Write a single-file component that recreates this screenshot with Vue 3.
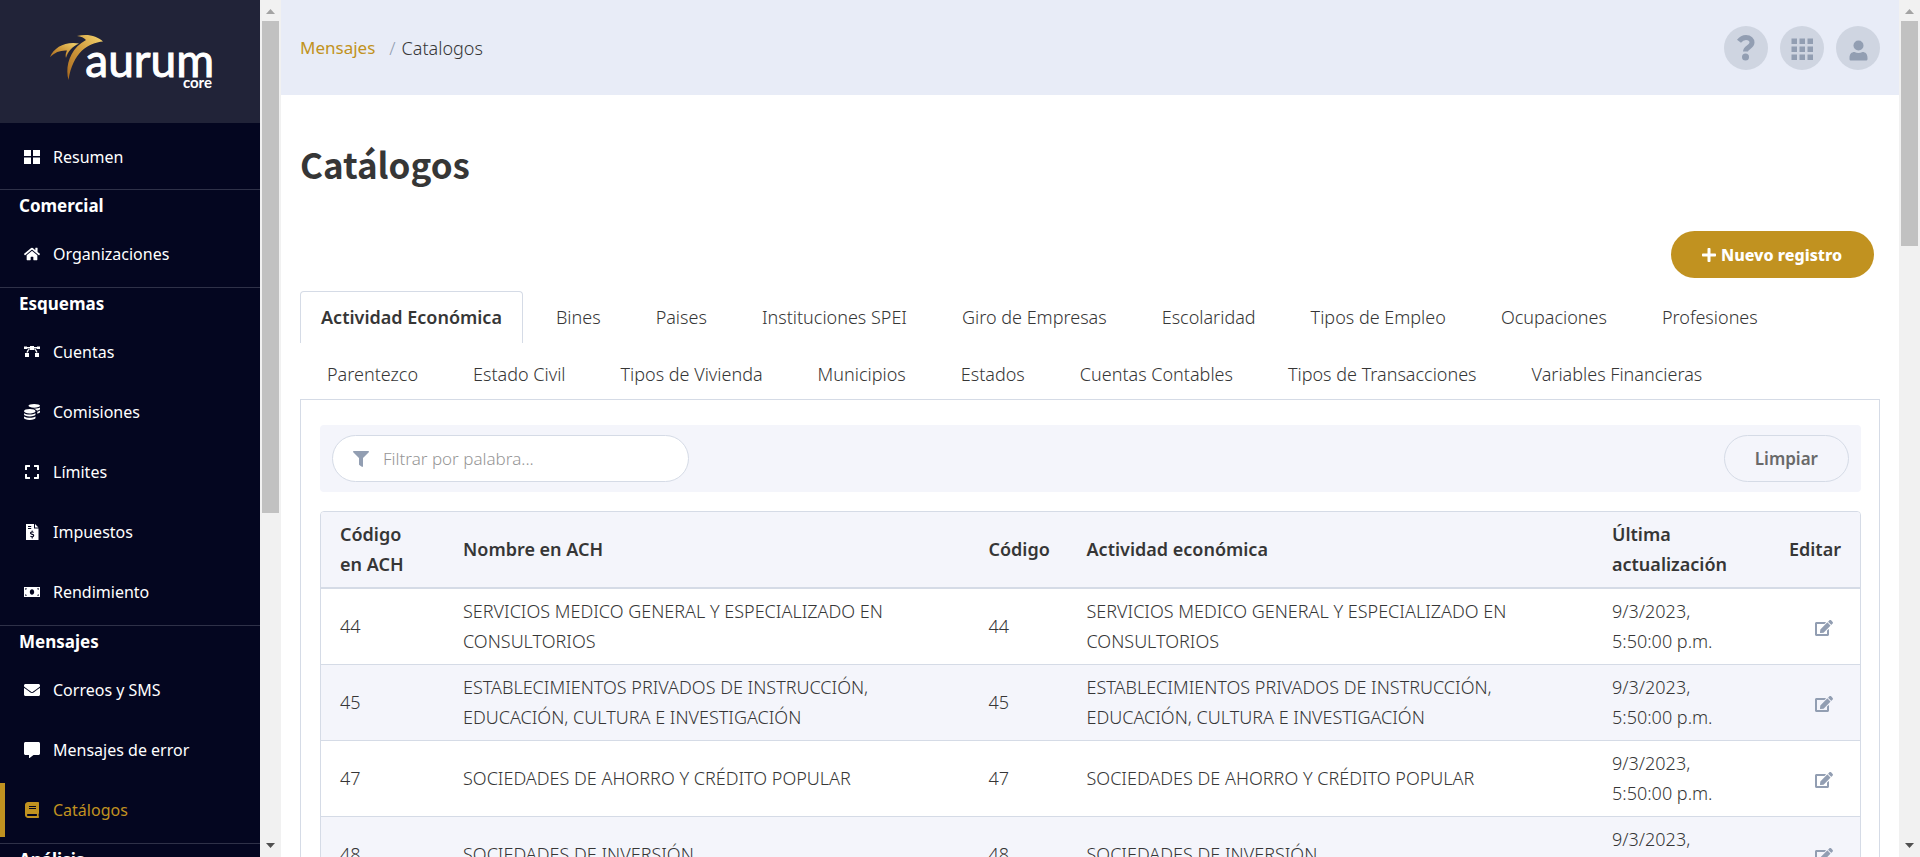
<script setup>
import { ref } from 'vue'

const icons = {
  grid: { box: '0 0 16 16', d: 'M0 1h7v6H0zM9 1h7v6H9zM0 8.500h7v6.500H0zM9 8.500h7v6.500H9z' },
  home: { box: '0 0 576 512', d: 'M280.37 148.26L96 300.11V464a16 16 0 0 0 16 16l112.06-.29a16 16 0 0 0 15.92-16V368a16 16 0 0 1 16-16h64a16 16 0 0 1 16 16v95.64a16 16 0 0 0 16 16.05L464 480a16 16 0 0 0 16-16V300L295.67 148.26a12.19 12.19 0 0 0-15.3 0zM571.6 251.47L488 182.56V44.05a12 12 0 0 0-12-12h-56a12 12 0 0 0-12 12v72.61L318.47 43a48 48 0 0 0-61 0L4.34 251.47a12 12 0 0 0-1.6 16.9l25.5 31A12 12 0 0 0 45.15 301l235.22-193.74a12.19 12.19 0 0 1 15.3 0L530.9 301a12 12 0 0 0 16.9-1.6l25.5-31a12 12 0 0 0-1.7-16.93z' },
  bezier: { box: '0 0 16 16', d: 'M6 2h4v4H6zM1 9h4v4H1zM11 9h4v4h-4zM0 2.500h3v2.500H0zM13 2.500h3v2.500h-3zM3 3h3v1.500H3zM10 3h3v1.500h-3zM4.500 5H6C5 6 4.300 7 4 8.500H2.500C2.800 7 3.500 6 4.500 5zM11.500 5H10c1 1 1.700 2 2 3.500h1.500c-.3-1.500-1-2.500-2-3.500z' },
  coins: { box: '0 0 16 16', d: 'M4.500 1.800C4.500.8 7 0 10.200 0S16 .8 16 1.800s-2.600 1.900-5.800 1.900S4.500 2.800 4.500 1.800zM16 3.600v1.500c0 .7-1.200 1.300-3 1.600-.6-1-1.900-1.700-3.600-2 2.800.1 5.400-.2 6.600-1.100zM16 6.600v1.500c0 .7-1.100 1.300-2.700 1.600V7.800c1.100-.3 2.100-.7 2.700-1.200zM0 7.200c0-1.200 2.500-2.100 5.700-2.100s5.800.9 5.800 2.100-2.600 2.200-5.800 2.200S0 8.400 0 7.200zM0 9.300c1.200.9 3.400 1.200 5.700 1.200s4.600-.3 5.800-1.200v1.300c0 1.100-2.600 1.900-5.800 1.900S0 11.700 0 10.600zM0 12.500c1.200.9 3.400 1.200 5.700 1.200s4.600-.3 5.800-1.200v1.600c0 1.100-2.600 1.900-5.800 1.900S0 15.200 0 14.100z' },
  expand: { box: '-32 0 512 512', d: 'M0 180V56c0-13.3 10.7-24 24-24h124c6.6 0 12 5.4 12 12v40c0 6.6-5.4 12-12 12H64v84c0 6.600-5.400 12-12 12H12c-6.600 0-12-5.400-12-12zM288 44v40c0 6.600 5.400 12 12 12h84v84c0 6.600 5.400 12 12 12h40c6.600 0 12-5.400 12-12V56c0-13.300-10.700-24-24-24H300c-6.600 0-12 5.400-12 12zm148 276h-40c-6.600 0-12 5.400-12 12v84h-84c-6.600 0-12 5.400-12 12v40c0 6.600 5.400 12 12 12h124c13.300 0 24-10.700 24-24V332c0-6.600-5.400-12-12-12zM160 468v-40c0-6.600-5.400-12-12-12H64v-84c0-6.600-5.400-12-12-12H12c-6.600 0-12 5.400-12 12v124c0 13.300 10.700 24 24 24h124c6.600 0 12-5.400 12-12z' },
  invoice: { box: '0 0 16 16', d: 'M2 0h8v4.500h4.500V16H2zM11 0l3.500 3.500H11zM4 2v1h3.200V2zM4 4v1h3.200V4zM7.700 6.500v1C6.600 7.600 6 8.300 6 9.100c0 1 .7 1.400 1.700 1.700 1 .3 1.300.4 1.300.8s-.4.600-.9.600c-.6 0-1-.2-1.400-.5l-.6.900c.4.400 1 .6 1.600.7v1.100h1v-1.100c1-.2 1.500-.9 1.500-1.700 0-1.100-.8-1.500-1.800-1.800-.9-.2-1.200-.4-1.200-.7 0-.4.300-.6.800-.6.400 0 .8.200 1.200.4l.6-.8c-.3-.3-.7-.5-1.200-.600v-1z' },
  money: { box: '0 0 16 16', d: 'M0 3h16v10H0zM1.200 4.200v1.600a1.600 1.600 0 0 0 1.600-1.600zM14.800 4.200h-1.600a1.600 1.600 0 0 0 1.600 1.600zM1.200 11.800h1.600a1.600 1.600 0 0 0-1.600-1.600zM14.800 11.800v-1.600a1.600 1.600 0 0 0-1.600 1.600zM8 5.200c-1.200 0-2.200 1.200-2.200 2.800s1 2.800 2.200 2.800 2.200-1.200 2.200-2.800S9.200 5.200 8 5.200z' },
  mail: { box: '0 0 512 512', d: 'M502.3 190.8c3.900-3.100 9.700-.2 9.700 4.700V400c0 26.500-21.500 48-48 48H48c-26.500 0-48-21.500-48-48V195.600c0-5 5.700-7.800 9.700-4.700 22.400 17.400 52.100 39.500 154.100 113.600 21.100 15.400 56.700 47.800 92.200 47.600 35.700.3 72-32.800 92.300-47.600 102-74.100 131.600-96.300 154-113.700zM256 320c23.200.4 56.600-29.200 73.400-41.400 132.700-96.300 142.800-104.700 173.400-128.700 5.800-4.500 9.200-11.500 9.200-18.900v-19c0-26.500-21.500-48-48-48H48c-26.500 0-48 21.500-48 48v19c0 7.400 3.400 14.300 9.200 18.900 30.600 23.900 40.700 32.400 173.400 128.700 16.800 12.200 50.200 41.800 73.400 41.400z' },
  message: { box: '0 0 512 512', d: 'M462 0H50C22 0 0 22 0 50v316c0 28 22 50 50 50h110v84c0 9.800 11.200 15.500 19.100 9.700L304 416h158c28 0 50-22 50-50V50c0-28-22-50-50-50z' },
  book: { box: '-32 0 512 512', d: 'M448 360V24c0-13.300-10.700-24-24-24H96C43 0 0 43 0 96v320c0 53 43 96 96 96h328c13.300 0 24-10.700 24-24v-16c0-7.500-3.500-14.300-8.900-18.700-4.200-15.400-4.200-59.300 0-74.700 5.400-4.300 8.900-11.100 8.900-18.600zM128 134c0-3.300 2.700-6 6-6h212c3.300 0 6 2.700 6 6v20c0 3.300-2.700 6-6 6H134c-3.300 0-6-2.700-6-6v-20zm0 64c0-3.300 2.700-6 6-6h212c3.300 0 6 2.700 6 6v20c0 3.300-2.700 6-6 6H134c-3.300 0-6-2.700-6-6v-20zm253.400 250H96c-17.700 0-32-14.300-32-32 0-17.600 14.400-32 32-32h285.400c-1.900 17.100-1.900 46.900 0 64z' },
}

const sections = [
  { items: [{ label: 'Resumen', icon: 'grid' }] },
  { title: 'Comercial', items: [{ label: 'Organizaciones', icon: 'home' }] },
  {
    title: 'Esquemas',
    items: [
      { label: 'Cuentas', icon: 'bezier' },
      { label: 'Comisiones', icon: 'coins' },
      { label: 'Límites', icon: 'expand' },
      { label: 'Impuestos', icon: 'invoice' },
      { label: 'Rendimiento', icon: 'money' },
    ],
  },
  {
    title: 'Mensajes',
    items: [
      { label: 'Correos y SMS', icon: 'mail' },
      { label: 'Mensajes de error', icon: 'message' },
      { label: 'Catálogos', icon: 'book', active: true },
    ],
  },
  { title: 'Análisis', items: [] },
]

const tabs = [
  'Actividad Económica', 'Bines', 'Paises', 'Instituciones SPEI', 'Giro de Empresas', 'Escolaridad',
  'Tipos de Empleo', 'Ocupaciones', 'Profesiones', 'Parentezco', 'Estado Civil', 'Tipos de Vivienda',
  'Municipios', 'Estados', 'Cuentas Contables', 'Tipos de Transacciones', 'Variables Financieras',
]
const activeTab = ref('Actividad Económica')
const filter = ref('')

const date = '9/3/2023, 5:50:00 p.m.'
const rows = [
  { code: 44, name: 'SERVICIOS MEDICO GENERAL Y ESPECIALIZADO EN CONSULTORIOS' },
  { code: 45, name: 'ESTABLECIMIENTOS PRIVADOS DE INSTRUCCIÓN, EDUCACIÓN, CULTURA E INVESTIGACIÓN' },
  { code: 47, name: 'SOCIEDADES DE AHORRO Y CRÉDITO POPULAR' },
  { code: 48, name: 'SOCIEDADES DE INVERSIÓN' },
]
</script>

<template>
  <div class="app">
    <aside class="sidebar">
      <div class="brand">
        <svg width="168" height="56" viewBox="49 34 168 56" role="img" aria-label="aurum core">
          <defs>
            <linearGradient id="gold" x1="0" y1="1" x2="1" y2="0">
              <stop offset="0" stop-color="#a8691f" />
              <stop offset="0.500" stop-color="#cf9a3c" />
              <stop offset="1" stop-color="#f5d670" />
            </linearGradient>
          </defs>
          <path fill="url(#gold)" d="M50 57C54 47 66 41 79 43.500C72 47 68 51 66 58C65 55 66 53 67 50.500C61 50 55 52 50 57z" />
          <path fill="url(#gold)" d="M77 36C88 33.500 97 36 103 41.500C88 43 73 52 68.500 80C65 68 69 49 86 40C84 37.500 81 36.500 77 36z" />
          <text class="brand-name" x="214" y="77" text-anchor="end">aurum</text>
          <text class="brand-sub" x="212" y="88" text-anchor="end">core</text>
        </svg>
      </div>
      <nav>
        <section v-for="(s, i) in sections" :key="i" class="group">
          <h2 v-if="s.title">{{ s.title }}</h2>
          <a v-for="item in s.items" :key="item.label" href="#" class="item" :class="{ active: item.active }">
            <svg width="16" height="16" :viewBox="icons[item.icon].box" aria-hidden="true">
              <path fill="currentColor" :fill-rule="item.icon === 'bezier' ? 'nonzero' : 'evenodd'" :d="icons[item.icon].d" />
            </svg>
            <span>{{ item.label }}</span>
          </a>
        </section>
      </nav>
    </aside>

    <div class="scrollbar" aria-hidden="true">
      <svg width="21" height="21" viewBox="0 0 21 21"><path fill="#a3a3a3" d="M6 14h9l-4.500-5z" /></svg>
      <div class="track"><div class="thumb" :style="{ height: '60.4%' }"></div></div>
      <svg width="21" height="21" viewBox="0 0 21 21"><path fill="#505050" d="M6 7h9l-4.500 5z" /></svg>
    </div>

    <div class="main">
      <header class="topbar">
        <nav class="crumbs" aria-label="Ruta">
          <a href="#">Mensajes</a>
          <span class="slash">/</span>
          <span>Catalogos</span>
        </nav>
        <div class="actions">
          <button type="button" aria-label="Ayuda">
            <svg width="44" height="44" viewBox="0 0 44 44">
              <path d="M15 15.300C17.500 12 19.500 11.500 22 11.500c4 0 6 2.300 6 5 0 4.500-6.500 4.800-6.500 9" fill="none" stroke="#929eb2" stroke-width="5" />
              <circle cx="21.500" cy="31" r="3.500" fill="#929eb2" />
            </svg>
          </button>
          <button type="button" aria-label="Aplicaciones">
            <svg width="44" height="44" viewBox="0 0 44 44">
              <g fill="#929eb2">
                <template v-for="y in [13, 21, 29]" :key="y">
                  <rect v-for="x in [11, 19, 27]" :key="x" :x="x + 0.500" :y="y - 0.500" width="5.500" height="5.500" />
                </template>
              </g>
            </svg>
          </button>
          <button type="button" aria-label="Cuenta">
            <svg width="44" height="44" viewBox="0 0 44 44">
              <circle cx="22.500" cy="19.500" r="5" fill="#929eb2" />
              <path fill="#929eb2" d="M13.500 32c0-4 2-6 5-6 2.500 1.300 5.500 1.300 8 0 3 0 5 2 5 6v1c0 1-.8 1.500-1.500 1.500h-15c-.8 0-1.500-.5-1.500-1.500z" />
            </svg>
          </button>
        </div>
      </header>

      <main class="content">
        <h1>Catálogos</h1>
        <div class="page-actions">
          <button type="button" class="primary">
            <svg width="14" height="16" viewBox="0 0 448 512" aria-hidden="true">
              <path fill="currentColor" d="M416 208H272V64c0-17.670-14.330-32-32-32h-32c-17.670 0-32 14.330-32 32v144H32c-17.670 0-32 14.330-32 32v32c0 17.670 14.330 32 32 32h144v144c0 17.670 14.330 32 32 32h32c17.670 0 32-14.330 32-32V304h144c17.670 0 32-14.330 32-32v-32c0-17.670-14.330-32-32-32z" />
            </svg>
            Nuevo registro
          </button>
        </div>

        <div class="tabs" role="tablist">
          <button
            v-for="t in tabs"
            :key="t"
            type="button"
            role="tab"
            :aria-selected="t === activeTab"
            :class="{ selected: t === activeTab }"
            @click="activeTab = t"
          >{{ t }}</button>
        </div>

        <div class="panel" role="tabpanel">
          <div class="toolbar">
            <label class="search">
              <svg width="16" height="16" viewBox="0 0 512 512" aria-hidden="true">
                <path fill="#929eb2" d="M487.976 0H24.028C2.710 0-8.047 25.866 7.058 40.971L192 225.941V432c0 7.831 3.821 15.170 10.237 19.662l80 55.980C298.020 518.690 320 507.493 320 487.980V225.941l184.947-184.970C520.021 25.896 509.338 0 487.976 0z" />
              </svg>
              <input v-model="filter" type="text" placeholder="Filtrar por palabra..." aria-label="Filtrar por palabra" />
            </label>
            <button type="button" class="clear" @click="filter = ''">Limpiar</button>
          </div>

          <div class="table-box">
            <table>
              <colgroup>
                <col class="c-ach" /><col /><col class="c-code" /><col /><col class="c-date" /><col class="c-edit" />
              </colgroup>
              <thead>
                <tr>
                  <th>Código en ACH</th>
                  <th>Nombre en ACH</th>
                  <th>Código</th>
                  <th>Actividad económica</th>
                  <th>Última actualización</th>
                  <th>Editar</th>
                </tr>
              </thead>
              <tbody>
                <tr v-for="r in rows" :key="r.code">
                  <td>{{ r.code }}</td>
                  <td>{{ r.name }}</td>
                  <td>{{ r.code }}</td>
                  <td>{{ r.name }}</td>
                  <td>{{ date }}</td>
                  <td>
                    <button type="button" class="edit" aria-label="Editar">
                      <svg width="18" height="16" viewBox="0 0 576 512">
                        <path fill="#929eb2" d="M402.600 83.200l90.200 90.200c3.800 3.800 3.800 10 0 13.800L274.400 405.600l-92.800 10.300c-12.400 1.400-22.900-9.100-21.500-21.500l10.300-92.800L388.800 83.200c3.800-3.800 10-3.800 13.800 0zm162-22.900l-48.800-48.800c-15.200-15.200-39.900-15.200-55.200 0l-35.400 35.400c-3.800 3.800-3.800 10 0 13.800l90.200 90.200c3.800 3.800 10 3.800 13.800 0l35.400-35.400c15.200-15.300 15.200-40 0-55.200zM384 346.200V448H64V128h229.800c3.200 0 6.200-1.300 8.500-3.500l40-40c7.600-7.600 2.200-20.500-8.500-20.500H48C21.500 64 0 85.500 0 112v352c0 26.500 21.500 48 48 48h352c26.500 0 48-21.500 48-48V306.200c0-10.700-12.900-16-20.500-8.500l-40 40c-2.200 2.300-3.500 5.300-3.500 8.500z" />
                      </svg>
                    </button>
                  </td>
                </tr>
              </tbody>
            </table>
          </div>
        </div>
      </main>
    </div>

    <div class="scrollbar" aria-hidden="true">
      <svg width="21" height="21" viewBox="0 0 21 21"><path fill="#a3a3a3" d="M6 14h9l-4.500-5z" /></svg>
      <div class="track"><div class="thumb" :style="{ height: '27.6%' }"></div></div>
      <svg width="21" height="21" viewBox="0 0 21 21"><path fill="#505050" d="M6 7h9l-4.500 5z" /></svg>
    </div>
  </div>
</template>

<style>
body {
  margin: 0;
  overflow: hidden;
}
</style>

<style scoped>
.app {
  display: flex;
  height: 100vh;
  overflow: hidden;
  background: #fff;
  color: #363636;
  font-family: "Noto Sans", sans-serif;
  font-size: 16px;
}
.app *,
.app *::before {
  box-sizing: border-box;
}
button,
input {
  font: inherit;
  color: inherit;
  padding: 0;
  border: 0;
  background: none;
}
button {
  cursor: pointer;
}
a {
  text-decoration: none;
}
svg {
  flex: none;
  display: block;
}

.sidebar {
  flex: 0 0 260px;
  overflow: hidden;
  background: #040620;
  color: #fff;
}
.brand {
  height: 123px;
  padding: 34px 0 0 49px;
  background: #212338;
}
.brand-name {
  font: 400 46px Lato, sans-serif;
  fill: #fff;
  stroke: #fff;
  stroke-width: 1px;
}
.brand-sub {
  font: 700 15px Lato, sans-serif;
  fill: #fff;
}
.group {
  padding-bottom: 3px;
  border-bottom: 1px solid #2f3148;
}
.group:first-child {
  padding: 4px 0 2px;
}
h2 {
  margin: 0;
  padding: 0 0 2px 19px;
  font-size: 17px;
  font-weight: 700;
  line-height: 32px;
}
.item {
  display: flex;
  align-items: center;
  gap: 13px;
  height: 54px;
  margin: 3px 0;
  padding-left: 24px;
  color: #fff;
}
.item + .item {
  margin-top: 6px;
}
.item.active {
  padding-left: 19px;
  border-left: 5px solid #c19220;
  color: #c19220;
}

.scrollbar {
  flex: 0 0 21px;
  display: flex;
  flex-direction: column;
  background: #f1f1f1;
}
.track {
  flex: 1;
  padding: 0 2px;
}
.thumb {
  background: #c1c1c1;
}

.main {
  flex: 1;
  min-width: 0;
  overflow: hidden;
  font-size: 18px;
  font-weight: 300;
}
.topbar {
  display: flex;
  align-items: center;
  justify-content: space-between;
  height: 95px;
  padding: 0 19px;
  background: #e8ecf7;
}
.crumbs {
  display: flex;
  gap: 6px;
}
.crumbs a {
  margin-right: 8px;
  color: #c19220;
  font-weight: 400;
  font-size: 17px;
}
.slash {
  color: #929eb2;
}
.actions {
  display: flex;
  gap: 12px;
}
.actions button {
  width: 44px;
  height: 44px;
  border-radius: 50%;
  background: #cfd5e1;
}
.content {
  padding: 42px 19px 0;
}
h1 {
  margin: 0;
  color: #363636;
  font: 700 35px/54px "Noto Sans CJK SC", sans-serif;
}
.page-actions {
  display: flex;
  justify-content: flex-end;
  padding: 40px 6px 0 0;
}
.primary {
  display: flex;
  align-items: center;
  justify-content: center;
  gap: 5px;
  height: 47px;
  padding: 0 32px 0 31px;
  border-radius: 24px;
  background: #c19220;
  color: #fff;
  font-size: 16px;
  font-weight: 800;
}
.tabs {
  display: flex;
  flex-wrap: wrap;
  gap: 5px 1px;
  padding-top: 13px;
}
.tabs button {
  height: 52px;
  padding: 0 27px;
  border: 0 solid #d5dbe6;
}
.tabs .selected {
  margin-right: 5px;
  padding: 0 20px 1px;
  border-width: 1px 1px 0;
  border-radius: 4px 4px 0 0;
  font-weight: 600;
}
.panel {
  margin-top: -1px;
  padding: 25px 18px 20px 19px;
  border: 1px solid #d5dbe6;
}
.toolbar {
  display: flex;
  justify-content: space-between;
  padding: 10px 12px;
  border-radius: 4px;
  background: #f4f5fb;
}
.search {
  display: flex;
  align-items: center;
  gap: 14px;
  width: 357px;
  height: 47px;
  padding: 0 20px;
  border: 1px solid #d5dbe6;
  border-radius: 24px;
  background: #fff;
  font-size: 17px;
}
.search input {
  flex: 1;
  min-width: 0;
  outline: none;
}
.search input::placeholder {
  color: #969696;
  opacity: 1;
}
.clear {
  height: 47px;
  padding: 0 30px;
  border: 1px solid #d5dbe6;
  border-radius: 24px;
  color: #696969;
  font-size: 17px;
  font-weight: 600;
}
.table-box {
  margin-top: 19px;
  overflow: hidden;
  border: 1px solid #d5dbe6;
  border-radius: 4px;
}
table {
  width: 100%;
  border-collapse: separate;
  border-spacing: 0;
  table-layout: fixed;
}
.c-ach { width: 123px; }
.c-code { width: 98px; }
.c-date { width: 176px; }
.c-edit { width: 91px; }
th,
td {
  padding: 7px 19px 8px;
  line-height: 30px;
  text-align: left;
  vertical-align: middle;
}
th {
  border-bottom: 2px solid #d5dbe6;
  background: #f4f5fb;
  font-weight: 600;
}
td {
  border-bottom: 1px solid #d5dbe6;
}
th:last-child,
td:last-child {
  text-align: right;
}
tbody tr:nth-child(even) {
  background: #f4f5fb;
}
.edit {
  margin-right: 8px;
  vertical-align: middle;
}
</style>
